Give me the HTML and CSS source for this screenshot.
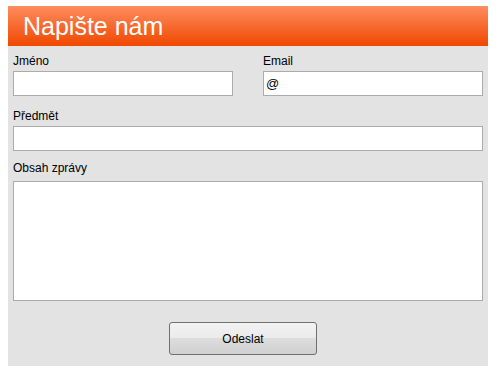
FILE: index.html
```html
<!DOCTYPE html>
<html lang="cs">
<head>
<meta charset="utf-8">
<link rel="stylesheet" href="styles.css">
</head>
<body>
<div class="box">
  <div class="header">Napište nám</div>
  <form class="form">
    <div class="row two">
      <div class="field">
        <label class="label">Jméno</label>
        <input class="input" type="text">
      </div>
      <div class="field">
        <label class="label">Email</label>
        <input class="input" type="text" value="@">
      </div>
    </div>
    <div class="row subject">
      <div class="field">
        <label class="label">Předmět</label>
        <input class="input" type="text">
      </div>
    </div>
    <div class="row message">
      <div class="field">
        <label class="label msg-label">Obsah zprávy</label>
        <textarea class="textarea"></textarea>
      </div>
    </div>
    <div class="actions">
      <button class="btn" type="button">Odeslat</button>
    </div>
  </form>
</div>
</body>
</html>
```
FILE: styles.css
```css
html, body {
  margin: 0;
  padding: 0;
  background: #ffffff;
}
body {
  padding: 6px 8px;
  font-family: "Liberation Sans", Arial, sans-serif;
}
.box {
  width: 480px;
  height: 360px;
  background: #e3e3e3;
  display: flex;
  flex-direction: column;
}
.header {
  height: 40px;
  box-sizing: border-box;
  padding-left: 15px;
  background: linear-gradient(to bottom, #fe8d5e 0%, #f76a30 50%, #f04800 100%);
  color: #ffffff;
  font-size: 25px;
  line-height: 40px;
}
.form {
  padding: 8px 5px 0 5px;
  display: flex;
  flex-direction: column;
}
.row.two {
  display: grid;
  grid-template-columns: 220px 220px;
  column-gap: 30px;
}
.subject { margin-top: 13px; }
.message { margin-top: 10px; }
.field {
  display: flex;
  flex-direction: column;
}
.label {
  font-size: 12px;
  line-height: 14px;
  color: #000;
  margin-bottom: 3px;
}
.msg-label { margin-bottom: 6px; }
.input {
  box-sizing: border-box;
  height: 25px;
  margin: 0;
  border: 1px solid #ababab;
  background: #fff;
  padding: 0 2px;
  font-family: "Liberation Sans", Arial, sans-serif;
  font-size: 13px;
  color: #000;
  outline: none;
}
.row.subject .input { width: 470px; }
.textarea {
  box-sizing: border-box;
  width: 470px;
  height: 120px;
  margin: 0;
  border: 1px solid #ababab;
  background: #fff;
  resize: none;
  outline: none;
}
.actions {
  display: flex;
  justify-content: center;
  padding-right: 10px;
  margin-top: 21px;
}
.btn {
  width: 148px;
  height: 33px;
  box-sizing: border-box;
  border: 1px solid #707070;
  border-radius: 3px;
  background: linear-gradient(to bottom, #f2f2f2 0%, #ebebeb 50%, #dddddd 50%, #d0d0d0 100%);
  font-family: "Liberation Sans", Arial, sans-serif;
  font-size: 12px;
  color: #000;
  padding: 0;
  margin: 0;
}
```
